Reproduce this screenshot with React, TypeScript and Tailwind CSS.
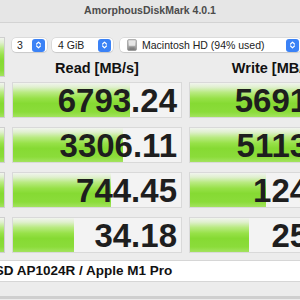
import React from "react";

const bar =
  "bg-[linear-gradient(to_bottom,#f1f4ee_0%,#e0f0cf_12%,#b8ea80_28%,#97e148_45%,#86da33_60%,#8bdc3a_85%,#a3e35f_100%)]";

const rows = [
  { label: "SEQ1M QD8", read: "6793.24", readW: 117, write: "5691.49", writeW: 115 },
  { label: "SEQ1M QD1", read: "3306.11", readW: 110, write: "5113.52", writeW: 114 },
  { label: "RND4K QD64", read: "744.45", readW: 98, write: "124.36", writeW: 76 },
  { label: "RND4K QD1", read: "34.18", readW: 61, write: "25.63", writeW: 59 },
];

function Stepper() {
  return (
    <span className="flex h-[13px] w-[13px] items-center justify-center rounded-[3px] bg-[#3b82f6]">
      <svg width="7" height="10" viewBox="0 0 7 10" fill="none">
        <path d="M1.6 4 L3.5 2.1 L5.4 4" stroke="white" strokeWidth="1.2" strokeLinecap="round" strokeLinejoin="round" />
        <path d="M1.6 6 L3.5 7.9 L5.4 6" stroke="white" strokeWidth="1.2" strokeLinecap="round" strokeLinejoin="round" />
      </svg>
    </span>
  );
}

function DiskIcon() {
  return (
    <svg width="10" height="12" viewBox="0 0 10 12">
      <defs>
        <linearGradient id="hd" x1="0" y1="0" x2="0" y2="1">
          <stop offset="0" stopColor="#d8d8d8" />
          <stop offset="0.6" stopColor="#a9a9a9" />
          <stop offset="1" stopColor="#7e7e7e" />
        </linearGradient>
      </defs>
      <rect x="0.5" y="0.5" width="9" height="11" rx="1.5" fill="url(#hd)" stroke="#8a8a8a" strokeWidth="0.6" />
      <rect x="1.8" y="1.8" width="6.4" height="5" rx="0.6" fill="#e6e6e6" />
      <line x1="2.5" y1="9" x2="7.5" y2="9" stroke="#6b6b6b" strokeWidth="0.6" />
      <line x1="2.5" y1="10.2" x2="7.5" y2="10.2" stroke="#6b6b6b" strokeWidth="0.6" />
    </svg>
  );
}

function Select({ width, children }: { width: string; children: React.ReactNode }) {
  return (
    <div
      className={`${width} flex h-[14px] items-center justify-between rounded-[4px] bg-white pr-[2px] text-[10.5px] leading-none text-[#222] shadow-[0_0_0_0.5px_rgba(0,0,0,0.14),0_1px_1px_rgba(0,0,0,0.08)]`}
    >
      {children}
      <Stepper />
    </div>
  );
}

function Cell({ value, w }: { value: string; w: number }) {
  return (
    <div className="relative h-[36px] w-[170px] border border-[#d9d9d9] bg-[#f3f3f3]">
      <div className={`absolute inset-y-0 left-0 ${bar}`} style={{ width: w }} />
      <div className="relative flex h-full items-center justify-end pr-[4px] text-[33px] font-bold leading-none text-[#1e1e1e]">
        {value}
      </div>
    </div>
  );
}

export default function App() {
  return (
    <div className="h-[300px] w-[300px] overflow-hidden bg-[#ececec] font-['Liberation_Sans',Arial,sans-serif]">
      <div className="flex h-[23px] items-center justify-center border-b border-[#d3d3d3] bg-[#e6e6e6] text-[10.5px] font-bold text-[#4b4b4b]">
        AmorphousDiskMark 4.0.1
      </div>

      <div className="-ml-[59px] w-[418px] pt-[14px]">
        <div className="flex gap-[7px]">
          <button className={`h-[40px] w-[64px] border border-[#cfcfcf] pr-[10px] text-[10px] font-bold text-white ${bar}`}>
            All
          </button>
          <div className="flex-1">
            <div className="mt-[1px] flex">
              <Select width="w-[35px] pl-[5px]">
                <span>3</span>
              </Select>
              <div className="w-[5px]" />
              <Select width="w-[61px] pl-[6px]">
                <span>4 GiB</span>
              </Select>
              <div className="w-[7px]" />
              <Select width="w-[181px] pl-[7px]">
                <span className="flex items-center gap-[5px]">
                  <DiskIcon />
                  Macintosh HD (94% used)
                </span>
              </Select>
            </div>
            <div className="mt-[8px] grid grid-cols-[170px_170px] gap-x-[7px] text-[14.5px] font-bold leading-[17px] text-[#111]">
              <div className="text-center">Read [MB/s]</div>
              <div className="text-center">Write [MB/s]</div>
            </div>
          </div>
        </div>

        <div className="mt-[5px] flex flex-col gap-[9px]">
          {rows.map((r) => (
            <div key={r.label} className="flex gap-[7px]">
              <button className={`h-[36px] w-[64px] border border-[#cfcfcf] pl-[2px] pr-[10px] text-[7px] font-bold leading-tight text-white ${bar}`}>
                {r.label}
              </button>
              <Cell value={r.read} w={r.readW} />
              <Cell value={r.write} w={r.writeW} />
            </div>
          ))}
        </div>

        <div className="mt-[7px] flex h-[22px] items-center border-y border-[#d6d6d6] bg-white text-[13.5px] font-bold text-[#111]">
          <span className="-ml-[4px]">APPLE SSD AP1024R / Apple M1 Pro</span>
        </div>
      </div>
      <div className="h-[14px]" />
      <div className="h-[3px] bg-[#cfcfcf]" />
    </div>
  );
}
